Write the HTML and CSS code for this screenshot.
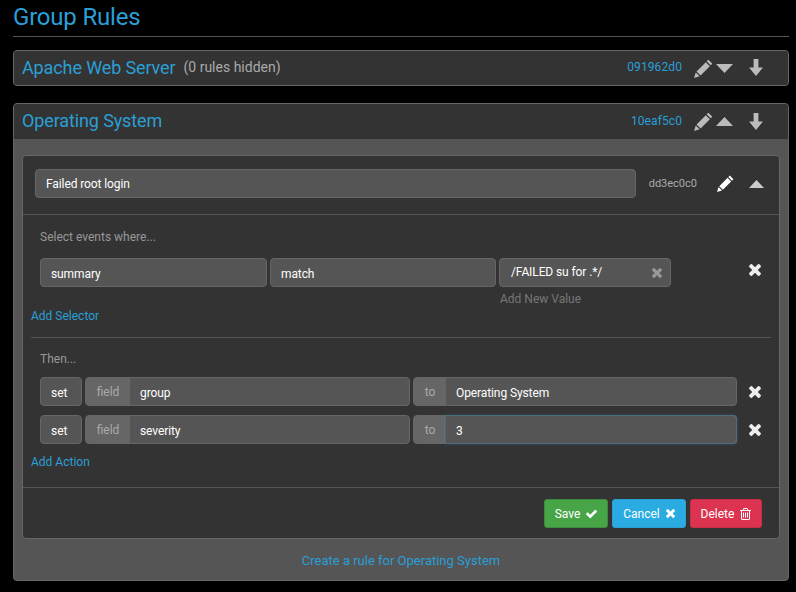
FILE: index.html
```html
<!DOCTYPE html>
<html lang="en">
<head>
  <meta charset="UTF-8" />
  <title>Group Rules</title>
  <link rel="stylesheet" href="styles.css">
</head>
<body>
  <svg class="icon-defs" width="0" height="0">
    <symbol id="i-pencil" viewBox="0 0 18 18"><path d="M13.6.6l3.8 3.8-1.6 1.6L12 2.2zM11.2 3l3.8 3.8-8.8 8.8-3.8-3.8zM1.7 12.7l3.6 3.6L0 18z"/></symbol>
    <symbol id="i-up" viewBox="0 0 17 9" preserveAspectRatio="none"><path d="M8.5 0L17 9H0z"/></symbol>
    <symbol id="i-down" viewBox="0 0 17 9" preserveAspectRatio="none"><path d="M0 0h17L8.5 9z"/></symbol>
    <symbol id="i-arrow" viewBox="0 0 16 18"><path d="M5.6 0h4.8v8.6H15L8 17 1 8.6h4.6z"/></symbol>
    <symbol id="i-times" viewBox="110 366 1188 1188"><path d="M1298 1322q0 40-28 68l-136 136q-28 28-68 28t-68-28l-294-294-294 294q-28 28-68 28t-68-28l-136-136q-28-28-28-68t28-68l294-294-294-294q-28-28-28-68t28-68l136-136q28-28 68-28t68 28l294 294 294-294q28-28 68-28t68 28l136 136q28 28 28 68t-28 68l-294 294 294 294q28 28 28 68z"/></symbol>
    <symbol id="i-check" viewBox="121 320 1550 1200"><path d="M1671 566q0 40-28 68l-724 724-136 136q-28 28-68 28t-68-28l-136-136-362-362q-28-28-28-68t28-68l136-136q28-28 68-28t68 28l294 295 656-657q28-28 68-28t68 28l136 136q28 28 28 68z"/></symbol>
    <symbol id="i-trash" viewBox="0 128 1408 1536"><path d="M512 736v576q0 14-9 23t-23 9h-64q-14 0-23-9t-9-23v-576q0-14 9-23t23-9h64q14 0 23 9t9 23zm256 0v576q0 14-9 23t-23 9h-64q-14 0-23-9t-9-23v-576q0-14 9-23t23-9h64q14 0 23 9t9 23zm256 0v576q0 14-9 23t-23 9h-64q-14 0-23-9t-9-23v-576q0-14 9-23t23-9h64q14 0 23 9t9 23zm128 724v-948h-896v948q0 22 7 40.5t14.5 27 10.5 8.5h832q3 0 10.5-8.5t14.5-27 7-40.5zm-672-1076h448l-48-117q-7-9-17-11h-317q-10 2-17 11zm928 32v64q0 14-9 23t-23 9h-96v948q0 83-47 143.5t-113 60.5h-832q-66 0-113-58.5t-47-141.5v-952h-96q-14 0-23-9t-9-23v-64q0-14 9-23t23-9h309l70-167q15-37 54-63t79-26h320q40 0 79 26t54 63l70 167h309q14 0 23 9t9 23z"/></symbol>
  </svg>

  <h1 class="page-title">Group Rules</h1>

  <div class="panel">
    <div class="group-heading">
      <span class="group-name">Apache Web Server</span>
      <span class="hidden-count">(0 rules hidden)</span>
      <span class="group-id">091962d0</span>
      <svg class="ic-pencil"><use href="#i-pencil"/></svg>
      <svg class="ic-caret"><use href="#i-down"/></svg>
      <svg class="ic-arrow"><use href="#i-arrow"/></svg>
    </div>
  </div>

  <div class="panel">
    <div class="group-heading open">
      <span class="group-name">Operating System</span>
      <span class="group-id">10eaf5c0</span>
      <svg class="ic-pencil"><use href="#i-pencil"/></svg>
      <svg class="ic-caret"><use href="#i-up"/></svg>
      <svg class="ic-arrow"><use href="#i-arrow"/></svg>
    </div>
    <div class="group-body">
      <div class="rule">
        <div class="rule-heading">
          <div class="field rule-name">Failed root login</div>
          <span class="rule-id">dd3ec0c0</span>
          <svg class="ic-pencil white"><use href="#i-pencil"/></svg>
          <svg class="ic-caret light"><use href="#i-up"/></svg>
        </div>

        <div class="rule-main">
          <p class="hint first">Select events where...</p>
          <div class="selector-row">
            <div class="field sel-key">summary</div>
            <div class="field sel-op">match</div>
            <div class="sel-values">
              <div class="field sel-val">/FAILED su for .*/<svg class="ic-clear"><use href="#i-times"/></svg></div>
              <span class="add-value">Add New Value</span>
            </div>
            <svg class="ic-remove sel-remove"><use href="#i-times"/></svg>
          </div>
          <a class="add-link add-selector">Add Selector</a>
          <hr class="divider">
          <p class="hint">Then...</p>
          <div class="action-row">
            <div class="field verb">set</div>
            <div class="field-group wide">
              <span class="addon">field</span><span class="field-val">group</span>
            </div>
            <div class="field-group grow">
              <span class="addon to">to</span><span class="field-val">Operating System</span>
            </div>
            <svg class="ic-remove"><use href="#i-times"/></svg>
          </div>
          <div class="action-row">
            <div class="field verb">set</div>
            <div class="field-group wide">
              <span class="addon">field</span><span class="field-val">severity</span>
            </div>
            <div class="field-group grow">
              <span class="addon to">to</span><span class="field-val focused">3</span>
            </div>
            <svg class="ic-remove"><use href="#i-times"/></svg>
          </div>
          <a class="add-link add-action">Add Action</a>
        </div>

        <div class="rule-footer">
          <button class="btn save">Save <svg><use href="#i-check"/></svg></button>
          <button class="btn cancel">Cancel <svg class="ic-btn-x"><use href="#i-times"/></svg></button>
          <button class="btn delete">Delete <svg><use href="#i-trash"/></svg></button>
        </div>
      </div>
      <a class="create-rule">Create a rule for Operating System</a>
    </div>
  </div>
</body>
</html>
```

FILE: styles.css
```css
body {
  margin: 0;
  padding: 0 7px 0 13px;
  background: #000;
  color: #fff;
  font-family: Roboto, "Liberation Sans", sans-serif;
  font-size: 12px;
  overflow: hidden;
}
.icon-defs {
  position: absolute;
}
svg {
  fill: currentColor;
  display: block;
  flex: none;
}
.page-title {
  margin: 0 0 13px;
  height: 36px;
  border-bottom: 1px solid #555;
  color: #2a9fd6;
  font-size: 24px;
  font-weight: 400;
  line-height: 35px;
  letter-spacing: -0.2px;
}
.panel {
  background: #555;
  border: 1px solid #666;
  border-radius: 4px;
  margin-bottom: 17px;
}
.group-heading {
  display: flex;
  align-items: center;
  height: 34px;
  padding: 0 24px 0 8px;
  background: #333;
  border-radius: 3px;
  color: #bbb;
}
.group-heading.open {
  height: 35px;
  border-radius: 3px 3px 0 0;
}
.group-name {
  color: #2a9fd6;
  font-size: 18px;
  letter-spacing: -0.12px;
  margin-bottom: 2px;
}
.hidden-count {
  margin-left: 8px;
  font-size: 14px;
  color: #aaa;
  margin-bottom: 2px;
}
.group-id {
  margin-left: auto;
  margin-right: 12px;
  margin-bottom: 2px;
  color: #2a9fd6;
  font-size: 12px;
  letter-spacing: 0.1px;
}
.ic-pencil {
  width: 19px;
  height: 19px;
  margin-right: 3px;
}
.ic-pencil.white {
  width: 17px;
  height: 17px;
  color: #fff;
  margin: 0 15px 0 20px;
}
.ic-caret {
  width: 17px;
  height: 9px;
}
.ic-arrow {
  width: 16px;
  height: 18px;
  margin-left: 15px;
}
.ic-caret.light {
  width: 15px;
  height: 8px;
  color: #ccc;
}
.group-body {
  padding: 16px 8px 0 8px;
}
.rule {
  background: #333;
  border: 1px solid #666;
  border-radius: 4px;
}
.rule-heading {
  display: flex;
  align-items: center;
  height: 55px;
  padding: 0 15px 3px 12px;
  border-bottom: 1px solid #555;
  color: #aaa;
}
.field {
  background: #555;
  border: 1px solid #666;
  border-radius: 4px;
  height: 29px;
  line-height: 31px;
  padding: 0 10px;
  box-sizing: border-box;
  color: #fff;
  letter-spacing: -0.1px;
}
.rule-name {
  flex: 1;
  line-height: 29px;
}
.rule-id {
  margin-left: 13px;
  font-size: 11px;
  color: #aaa;
}
.rule-main {
  padding: 0 8px;
}
.hint {
  margin: 0;
  padding-left: 9px;
  color: #999;
  line-height: 14px;
}
.hint.first {
  padding-top: 15px;
  margin-bottom: 14px;
}
.selector-row {
  display: flex;
  gap: 3px;
  padding-left: 9px;
  height: 47px;
}
.sel-key {
  width: 227px;
}
.sel-op {
  width: 226px;
}
.sel-values {
  width: 172px;
}
.sel-val {
  display: flex;
  align-items: center;
  justify-content: space-between;
  padding: 0 8px 0 11px;
}
.add-value {
  display: block;
  margin: 5px 0 0 1px;
  color: #777;
  line-height: 14px;
}
.ic-clear {
  width: 10px;
  height: 10px;
  color: #999;
}
.ic-remove {
  width: 12px;
  height: 12px;
  color: #eee;
  margin-left: 9px;
}
.sel-remove {
  margin-left: 75px;
  margin-top: 6px;
}
.add-link {
  display: block;
  color: #2a9fd6;
  line-height: 14px;
}
.add-selector {
  margin-top: 4px;
}
.divider {
  border: 0;
  border-top: 1px solid #555;
  margin: 14px 0 14px;
}
.action-row {
  display: flex;
  align-items: center;
  gap: 3px;
  padding-left: 9px;
  margin-top: 9px;
}
.hint + .action-row {
  margin-top: 11px;
}
.verb {
  width: 42px;
  letter-spacing: 0;
}
.field-group {
  display: flex;
  height: 29px;
  border: 1px solid #666;
  border-radius: 4px;
  background: #555;
  box-sizing: border-box;
  line-height: 31px;
  letter-spacing: -0.1px;
}
.field-group.wide {
  width: 325px;
}
.field-group.grow {
  width: 324px;
}
.addon {
  width: 44px;
  height: 27px;
  background: #666;
  color: #aaa;
  text-align: center;
  border-radius: 3px 0 0 3px;
  flex: none;
  letter-spacing: 0;
  line-height: 29px;
}
.addon.to {
  width: 32px;
}
.field-val {
  flex: 1;
  height: 27px;
  padding-left: 10px;
}
.field-val.focused {
  box-shadow: 0 0 0 1px #4b6c80, 0 0 3px 1px rgba(102, 175, 233, 0.25);
  border-radius: 0 3px 3px 0;
}
.add-action {
  margin-top: 11px;
  padding-bottom: 18px;
}
.rule-footer {
  display: flex;
  justify-content: flex-end;
  gap: 4px;
  padding: 11px 17px 10px 16px;
  border-top: 1px solid #555;
}
.btn {
  display: flex;
  align-items: center;
  justify-content: center;
  gap: 6px;
  height: 29px;
  padding: 0;
  border: 1px solid transparent;
  border-radius: 3px;
  color: #fff;
  font: 12px Roboto, sans-serif;
}
.btn svg {
  width: 11px;
  height: 10px;
}
.btn .ic-btn-x {
  width: 9px;
  height: 9px;
}
.btn.delete svg {
  width: 11px;
  height: 12px;
}
.save {
  width: 64px;
  background: #47a447;
  border-color: #3d8b3d;
}
.cancel {
  width: 74px;
  background: #2aabe2;
  border-color: #2a9fd6;
}
.delete {
  width: 72px;
  background: #dc3450;
  border-color: #c92d47;
}
.create-rule {
  display: block;
  text-align: center;
  color: #2a9fd6;
  font-size: 13px;
  padding: 15px 0 12px;
  line-height: 14px;
}
```
